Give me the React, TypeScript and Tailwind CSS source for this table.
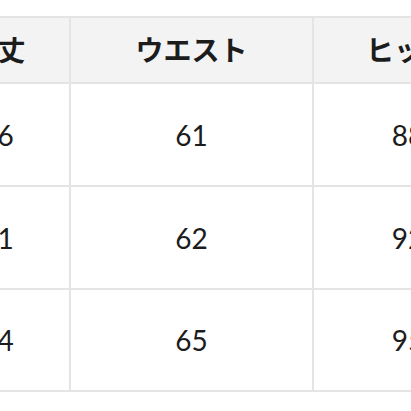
import { Fragment } from "react";

const rows = [
  { length: "76", waist: "61", hip: "88" },
  { length: "81", waist: "62", hip: "92" },
  { length: "84", waist: "65", hip: "95" },
];

export default function App() {
  return (
    <div
      className="w-[411px] h-[411px] overflow-hidden bg-white pt-[16px]"
      style={{ fontFamily: 'Lato, "Noto Sans CJK JP", sans-serif' }}
    >
      <div className="-ml-[76px] w-[580px] grid grid-cols-[143px_241px_188px] grid-rows-[64px_101px_101px_100px] gap-[2px] p-[2px] bg-[#e4e4e4] text-[#1c1c1c]">
        {["総丈", "ウエスト", "ヒップ"].map((h) => (
          <div
            key={h}
            className="bg-[#f3f3f3] flex items-center justify-center text-[28px] font-bold"
          >
            {h}
          </div>
        ))}
        {rows.map((r) => (
          <Fragment key={r.waist}>
            <div className="bg-white flex items-center justify-center text-[28px]">
              {r.length}
            </div>
            <div className="bg-white flex items-center justify-center text-[28px]">
              {r.waist}
            </div>
            <div className="bg-white flex items-center justify-center text-[28px]">
              {r.hip}
            </div>
          </Fragment>
        ))}
      </div>
    </div>
  );
}
